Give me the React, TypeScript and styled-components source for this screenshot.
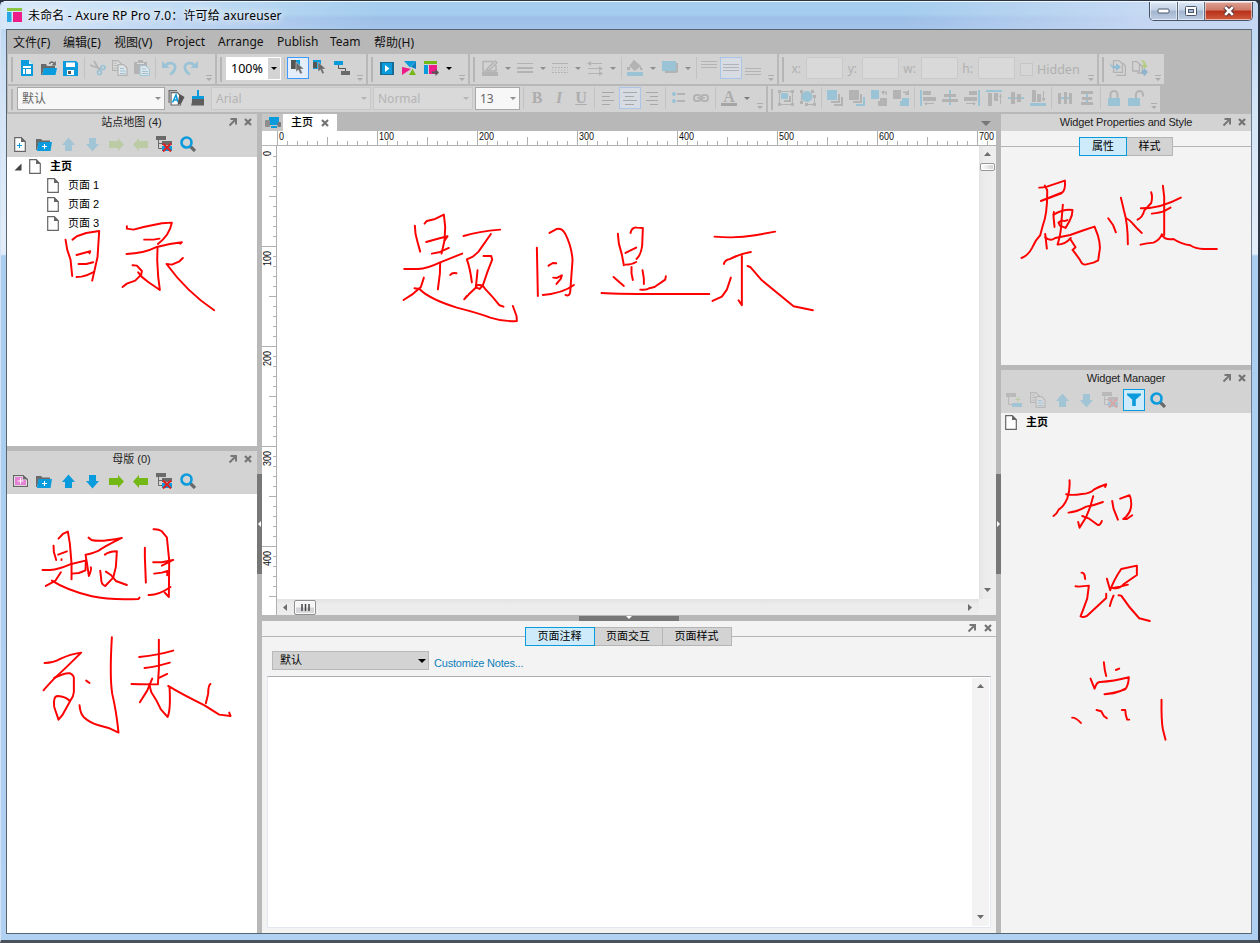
import React from "react";
import styled, { createGlobalStyle, css } from "styled-components";

const UI = `"Noto Sans", "Noto Sans CJK SC", sans-serif`;
const ARIAL = `"Liberation Sans", "Noto Sans CJK SC", sans-serif`;

const BLUE = "#0a9bdc";
const DIM_BLUE = "#9bc3d6";
const GREY = "#6a6a6a";
const DIM = "#b3b3b3";
const GREEN = "#74b816";
const PINK = "#ee1c88";
const CHROME = "#b8b8b8";
const BAR = "#d3d3d3";
const PANEL = "#f3f3f3";

const Global = createGlobalStyle`
  html, body { margin: 0; padding: 0; background: #2b3440; }
  * { box-sizing: border-box; }
  svg { display: block; flex: none; }
`;

/* ---------- window ---------- */
const Window = styled.div`
  position: relative;
  width: 1260px;
  height: 943px;
  overflow: hidden;
  display: flex;
  flex-direction: column;
  font-family: ${UI};
  font-size: 12px;
  color: #111;
  background: linear-gradient(to bottom, #b7d4f2 0, #d3e4f6 100px, #e4eefa 253px, #aacdf0 255px, #b1d1f3 100%);
  border-top: 1px solid #2a3442;
  border-left: 1px solid #d4e4f4;
  border-right: 2px solid #2c3644;
  border-bottom: 3px solid #4a525b;
  border-radius: 6px 6px 0 0;
`;
const TitleBar = styled.div`
  height: 28px;
  flex: none;
  display: flex;
  align-items: flex-start;
  justify-content: space-between;
  border-top: 1px solid #eef7ff;
  background: linear-gradient(to right, rgba(225, 238, 252, 0.85), rgba(225, 238, 252, 0) 380px, rgba(225, 238, 252, 0) 900px, rgba(210, 222, 245, 0.75) 1150px),
    linear-gradient(to bottom, #a6cdee 0, #a5cdee 12px, #9dbfe8 16px, #a3c3ea 100%);
`;
const TitleText = styled.div`
  display: flex;
  align-items: center;
  gap: 6px;
  height: 26px;
  padding-left: 6px;
  font-size: 12px;
  letter-spacing: 0.18px;
  color: #000;
  white-space: pre;
  text-shadow: 0 0 8px #fff, 0 0 8px #fff;
`;
const Controls = styled.div`
  display: flex;
  width: 104px;
  height: 19px;
  border: 1px solid #44536a;
  border-top: 0;
  border-radius: 0 0 5px 5px;
  overflow: hidden;
  margin-right: 5px;
`;
const Control = styled.div<{ $w: number; $close?: boolean }>`
  width: ${(p) => p.$w}px;
  display: flex;
  align-items: center;
  justify-content: center;
  border-right: ${(p) => (p.$close ? "0" : "1px solid #5a6a80")};
  box-shadow: inset 0 0 0 1px rgba(255, 255, 255, 0.55);
  background: ${(p) =>
    p.$close
      ? "linear-gradient(#dda193 0, #d07a68 45%, #b8301a 50%, #cf5c3c 100%)"
      : "linear-gradient(#dbe7f5 0, #c3d2e6 45%, #a3b5cf 50%, #bccde2 100%)"};
`;
const Client = styled.div`
  flex: 1;
  margin: 0 6px 6px 5px;
  display: flex;
  flex-direction: column;
  border: 1px solid #56656f;
  border-right-color: #6d7f90;
  background: ${CHROME};
`;

/* ---------- menu and toolbars ---------- */
const MenuBar = styled.div`
  display: flex;
  height: 24px;
  padding: 0 0 1px 6px;
  align-items: center;
`;
const MenuItem = styled.div<{ $w: number }>`
  width: ${(p) => p.$w}px;
  white-space: nowrap;
`;
const ToolRow = styled.div<{ $h: number }>`
  display: flex;
  height: ${(p) => p.$h}px;
  gap: 2px;
  padding-left: 1px;
  margin-bottom: 2px;
`;
const Bar = styled.div<{ $w: number; $lead?: number }>`
  position: relative;
  width: ${(p) => p.$w}px;
  height: 100%;
  display: flex;
  align-items: center;
  padding: 0 0 2px ${(p) => p.$lead ?? 8}px;
  background: ${BAR};
  &::before {
    content: "";
    position: absolute;
    left: 3px;
    top: 3px;
    bottom: 2px;
    width: 2px;
    background: #b5b5b5;
  }
`;
const Btn = styled.div<{ $on?: boolean; $hot?: boolean }>`
  width: 22px;
  height: 22px;
  flex: none;
  display: flex;
  align-items: center;
  justify-content: center;
  ${(p) =>
    p.$on &&
    css`
      border: 1px solid ${p.$hot ? "#3d9bff" : "#a9c6e6"};
      background: ${p.$hot ? "#e3eefa" : "#d6dbe4"};
    `}
`;
const CaretSlot = styled.div`
  width: 13px;
  flex: none;
  display: flex;
  justify-content: center;
`;
const SepSlot = styled.div<{ $w?: number }>`
  width: ${(p) => p.$w ?? 5}px;
  height: 22px;
  flex: none;
  display: flex;
  justify-content: center;
  &::after {
    content: "";
    width: 1px;
    background: #c2c2c2;
  }
`;
const MoreMark = styled.svg`
  position: absolute;
  right: 3px;
  bottom: 2px;
`;
const Combo = styled.div<{ $w: number; $ml?: number; $off?: boolean }>`
  width: ${(p) => p.$w}px;
  height: 23px;
  flex: none;
  margin-left: ${(p) => p.$ml ?? 0}px;
  display: flex;
  align-items: center;
  justify-content: space-between;
  padding: 0 3px 0 4px;
  font-size: 12px;
  color: ${(p) => (p.$off ? "#b4b4b4" : "#666")};
  background: ${(p) => (p.$off ? "#d9d9d9" : "#f7f7f7")};
  border: 1px solid ${(p) => (p.$off ? "#c9c9c9" : "#a8a8a8")};
`;
const Zoom = styled.div`
  width: 55px;
  height: 23px;
  margin-left: 1px;
  display: flex;
  align-items: center;
  justify-content: space-between;
  background: #fff;
  padding-left: 5px;
  color: #000;
  font-size: 12.5px;
`;
const ZoomDrop = styled.div`
  width: 12px;
  height: 21px;
  margin-right: 1px;
  background: ${BAR};
  display: flex;
  align-items: center;
  justify-content: center;
`;
const CoordLabel = styled.div<{ $w: number }>`
  width: ${(p) => p.$w}px;
  text-align: right;
  padding-right: 5px;
  color: #b0b0b0;
  font-size: 12px;
`;
const CoordBox = styled.div`
  width: 37px;
  height: 22px;
  background: #d9d9d9;
  border: 1px solid #c9c9c9;
  border-radius: 1px;
`;
const Check = styled.div`
  width: 13px;
  height: 13px;
  margin: 2px 4px 0 5px;
  border: 1px solid #c6c6c6;
  background: #d6d6d6;
`;
const Hidden = styled.div`
  color: #b0b0b0;
  font-size: 12.5px;
  letter-spacing: 0;
  padding-top: 2px;
`;

/* ---------- docked panels ---------- */
const Work = styled.div`
  flex: 1;
  display: flex;
  min-height: 0;
`;
const Side = styled.div`
  width: 250px;
  flex: none;
  display: flex;
  flex-direction: column;
`;
const Center = styled.div`
  width: 734px;
  flex: none;
  display: flex;
  flex-direction: column;
`;
const Splitter = styled.div`
  width: 5px;
  flex: none;
  display: flex;
  flex-direction: column;
  padding-top: 360px;
`;
const Handle = styled.div<{ $row?: boolean }>`
  width: ${(p) => (p.$row ? 100 : 5)}px;
  height: ${(p) => (p.$row ? 5 : 100)}px;
  display: flex;
  align-items: ${(p) => (p.$row ? "flex-start" : "center")};
  justify-content: center;
  background: #777;
`;
const RowGap = styled.div<{ $h: number }>`
  height: ${(p) => p.$h}px;
  flex: none;
  display: flex;
  justify-content: center;
  align-items: flex-end;
`;
const Panel = styled.div<{ $h?: number; $bg: string }>`
  ${(p) => (p.$h ? `height: ${p.$h}px; flex: none;` : "flex: 1;")}
  background: ${(p) => p.$bg};
`;
const PanelTitle = styled.div`
  height: 17px;
  display: grid;
  grid-template-columns: 44px 1fr 44px;
  grid-template-rows: 17px;
  align-items: center;
  background: ${BAR};
  font-family: ${ARIAL};
  font-size: 11px;
  color: #222;
  text-align: center;
  white-space: nowrap;
`;
const PanelName = styled.span<{ $cjk?: boolean; $ls?: number }>`
  padding-right: ${(p) => (p.$cjk ? 1 : 0)}px;
  line-height: ${(p) => (p.$cjk ? 15 : 13)}px;
  letter-spacing: ${(p) => p.$ls ?? 0}px;
`;
const PanelActions = styled.div`
  display: flex;
  justify-content: flex-end;
  gap: 5px;
  padding-right: 4px;
  padding-bottom: 1px;
`;
const PanelTools = styled.div`
  height: 26px;
  display: flex;
  align-items: center;
  padding-left: 1px;
  background: ${BAR};
`;
const PTool = styled.div<{ $on?: boolean; $dim?: boolean }>`
  width: ${(p) => (p.$on ? 22 : 24)}px;
  height: 22px;
  margin: ${(p) => (p.$on ? "0 1px" : "0")};
  display: flex;
  align-items: center;
  justify-content: center;
  ${(p) => p.$on && `border: 1px solid ${BLUE}; background: #cdebfa;`}
  & > svg { opacity: ${(p) => (p.$dim ? 0.24 : 1)}; }
`;
const Tree = styled.div`
  display: flex;
  flex-direction: column;
  font-family: ${ARIAL};
  font-size: 11px;
  color: #000;
`;
const Node = styled.div<{ $lead: number; $gap: number; $bold?: boolean }>`
  height: 19px;
  display: flex;
  align-items: center;
  gap: ${(p) => p.$gap}px;
  padding-left: ${(p) => p.$lead}px;
  font-weight: ${(p) => (p.$bold ? 700 : 400)};
`;
const NodeText = styled.span`
  line-height: 15px;
  padding-bottom: 1px;
`;
const Twisty = styled.svg`
  margin-right: -2px;
`;

/* ---------- canvas ---------- */
const TabStrip = styled.div`
  height: 17px;
  display: flex;
  justify-content: space-between;
  align-items: stretch;
  padding-right: 5px;
`;
const TabsLeft = styled.div`
  display: flex;
`;
const TabIcon = styled.div`
  width: 21px;
  background: #c6c6c6;
  display: flex;
  align-items: center;
  justify-content: center;
`;
const DocTab = styled.div`
  width: 54px;
  background: #fff;
  display: flex;
  align-items: center;
  justify-content: space-between;
  padding: 0 7px 0 8px;
  font-size: 11px;
  font-family: ${ARIAL};
  font-weight: 500;
  color: #000;
`;
const DropSlot = styled.div`
  display: flex;
  align-items: center;
  padding-top: 2px;
`;
const Sheet = styled.div`
  height: 484px;
  display: grid;
  grid-template-columns: 15px 702px 17px;
  grid-template-rows: 15px 453px 16px;
`;
const RulerTop = styled.div`
  grid-column: 2 / 4;
  background: #fff;
`;
const RulerCorner = styled.div`
  background: #fff;
  border-bottom: 1px solid #b5b5b5;
`;
const RulerLeft = styled.div`
  grid-row: 2 / 4;
  grid-column: 1;
  background: #fff;
`;
const Canvas = styled.div`
  background: #fff;
`;
const VScroll = styled.div<{ $bg?: string }>`
  display: flex;
  flex-direction: column;
  justify-content: space-between;
  align-items: center;
  padding: 5px 0 7px;
  background: ${(p) => p.$bg ?? "linear-gradient(to right, #e4e4e4, #ececec 5px, #eee)"};
`;
const VTop = styled.div`
  display: flex;
  flex-direction: column;
  align-items: center;
  gap: 7px;
`;
const VThumb = styled.div`
  width: 15px;
  height: 8px;
  border: 1px solid #969696;
  border-radius: 2px;
  background: linear-gradient(to right, #fff, #d0d0d0);
  box-shadow: inset 0 0 0 1px #fff;
`;
const HScroll = styled.div`
  display: flex;
  align-items: center;
  justify-content: space-between;
  padding: 0 7px 0 6px;
  background: linear-gradient(#e2e2e2, #ececec 5px, #ededed);
`;
const HLeft = styled.div`
  display: flex;
  align-items: center;
  gap: 7px;
`;
const HThumb = styled.div`
  width: 22px;
  height: 15px;
  border: 1px solid #8f8f8f;
  border-radius: 2px;
  background: linear-gradient(#f6f6f6 45%, #d2d2d6 55%, #dcdcdc);
  box-shadow: inset 0 0 0 1px #fbfbfb;
  display: flex;
  align-items: center;
  justify-content: center;
`;
const Corner = styled.div`
  background: #f0f0f0;
`;

/* ---------- notes / property tabs ---------- */
const NotesPanel = styled.div`
  flex: 1;
  background: ${PANEL};
  display: flex;
  flex-direction: column;
  padding: 0 5px 5px;
`;
const NotesTop = styled.div`
  display: flex;
  justify-content: flex-end;
  align-items: center;
  height: 16px;
  margin: 0 -6px 0 -5px;
  border-bottom: 1px solid #b5b5b5;
`;
const NotesActions = styled(PanelActions)`
  gap: 6px;
`;
const Seg = styled.div<{ $pull?: number }>`
  display: flex;
  justify-content: center;
  margin: -10px ${(p) => p.$pull ?? 0}px 0 0;
  position: relative;
  font-size: 11px;
  font-family: ${ARIAL};
`;
const SegItem = styled.div<{ $w: number; $on?: boolean }>`
  width: ${(p) => p.$w}px;
  height: 19px;
  display: flex;
  align-items: center;
  justify-content: center;
  padding-bottom: 3px;
  color: #000;
  background: ${(p) => (p.$on ? "#cdebfa" : BAR)};
  border: 1px solid ${(p) => (p.$on ? BLUE : "#b5b5b5")};
  border-left-width: ${(p) => (p.$on ? 1 : 0)}px;
`;
const NotesRow = styled.div`
  display: flex;
  align-items: center;
  gap: 5px;
  margin: 5px 0 6px 5px;
  font-size: 11px;
  font-family: ${ARIAL};
`;
const NotesSelect = styled.div`
  width: 157px;
  height: 19px;
  padding: 0 2px 0 7px;
  display: flex;
  align-items: center;
  justify-content: space-between;
  background: ${BAR};
  border: 1px solid #b8b8b8;
  color: #000;
`;
const Link = styled.span`
  color: #0f80b9;
  padding-top: 5px;
  letter-spacing: -0.2px;
`;
const NotesArea = styled.div`
  flex: 1;
  background: #fff;
  border: 1px solid #e1e6ef;
  border-top-color: #abadb3;
  display: flex;
  justify-content: flex-end;
  padding: 1px 1px;
`;
const NotesScroll = styled.div`
  width: 17px;
  display: flex;
  background: ${PANEL};
  & > div { flex: 1; }
`;
const HairLine = styled.div`
  height: 16px;
  border-bottom: 1px solid #b5b5b5;
`;
const Ink = styled.svg`
  position: absolute;
  left: -1px;
  top: -1px;
  pointer-events: none;
`;

/* ---------- small drawings ---------- */
const Svg = ({ children, w = 16, h = 16 }: { children: React.ReactNode; w?: number; h?: number }) => (
  <svg width={w} height={h} viewBox={`0 0 ${w} ${h}`} fill="none">
    {children}
  </svg>
);
const Caret = ({ c = "#8f8f8f" }: { c?: string }) => (
  <svg width={6} height={3} viewBox="0 0 6 3">
    <path d="M0 0H6L3 3Z" fill={c} />
  </svg>
);
const Tri = ({ d, c = "#6d6d6d", w = 7, h = 7 }: { d: string; c?: string; w?: number; h?: number }) => (
  <svg width={w} height={h} viewBox={`0 0 ${w} ${h}`}>
    <path d={d} fill={c} />
  </svg>
);
const More = () => (
  <MoreMark width="6" height="7" viewBox="0 0 6 7">
    <path d="M0 0H6V1H0ZM0 3H6L3 6Z" fill="#adadad" />
  </MoreMark>
);
const Float = () => (
  <Svg w={10} h={10}>
    <path d="M1.500 8.500L7 3M2.500 2H8V7.500" stroke="#777" strokeWidth="2" />
  </Svg>
);
const Close = () => (
  <Svg w={10} h={10}>
    <path d="M2 2L8 8M8 2L2 8" stroke="#747474" strokeWidth="2.200" />
  </Svg>
);
const Page = () => (
  <Svg w={12} h={15}>
    <path d="M1 .7H7.300L11.300 4.700V14.300H.7V.7Z" fill="#fff" stroke="#666" strokeWidth="1.200" />
    <path d="M7 0L12 5H7Z" fill="#666" />
  </Svg>
);
const AddPage = () => (
  <Svg w={12} h={15}>
    <path d="M1 .7H7.300L11.300 4.700V14.300H.7V.7Z" fill="#fff" stroke="#666" strokeWidth="1.200" />
    <path d="M7 0L12 5H7Z" fill="#666" />
    <path d="M5.500 6V11M3 8.500H8" stroke={BLUE} />
  </Svg>
);
const AddMaster = () => (
  <Svg w={15} h={12}>
    <path d="M.6 .6H10L14.400 4.500V11.400H.6Z" fill="#fff" stroke="#666" strokeWidth="1.200" />
    <path d="M10 0L15 4.500H10Z" fill="#666" />
    <path d="M2 2H9.500V5H13V10H2Z" fill="#e681d6" />
    <path d="M7.500 3V9M4.500 6H10.500" stroke="#fff" />
  </Svg>
);
const AddFolder = () => (
  <Svg w={16} h={13}>
    <path d="M0 1H5L6.500 2.500H14V4H3L1 12H0Z" fill={GREY} />
    <path d="M2.500 4H16L14.500 13H1Z" fill={BLUE} />
    <path d="M8.500 6V11M6 8.500H11" stroke="#fff" />
  </Svg>
);
const Up = () => (
  <Svg w={13} h={15}>
    <path d="M6.500 .5L13 8H10V14H3V8H0Z" fill={BLUE} />
  </Svg>
);
const Down = () => (
  <Svg w={13} h={15}>
    <path d="M6.500 14.500L13 7H10V1H3V7H0Z" fill={BLUE} />
  </Svg>
);
const Right = () => (
  <Svg w={15} h={13}>
    <path d="M15 6.500L9 0V3H0V10H9V13Z" fill={GREEN} />
  </Svg>
);
const Left = () => (
  <Svg w={15} h={13}>
    <path d="M0 6.500L6 0V3H15V10H6V13Z" fill={GREEN} />
  </Svg>
);
const TreeDelete = () => (
  <Svg>
    <path d="M0 0H10V4H0Z" fill={GREY} />
    <path d="M2.500 4V12.500H6M2.500 7.500H6" stroke={GREY} />
    <path d="M6 5H16V9H6Z" fill={GREY} />
    <path d="M6 10H16V15H6Z" fill={BLUE} />
    <path d="M7 7.500L15 15.500M15 7.500L7 15.500" stroke="#e01e1e" strokeWidth="2" />
  </Svg>
);
const TreeAdd = () => (
  <Svg>
    <path d="M0 1H10V5H0Z" fill={GREY} />
    <path d="M2.500 5V12.500H6" stroke={GREY} />
    <path d="M6 11H16V15H6Z" fill={BLUE} />
    <path d="M12 5V10M9.500 7.500H14.500" stroke={GREEN} />
  </Svg>
);
const Search = () => (
  <Svg>
    <path d="M10.500 10.500L15 15" stroke={GREY} strokeWidth="3.200" />
    <circle cx="6.500" cy="6.500" r="5" stroke={BLUE} strokeWidth="2.600" />
  </Svg>
);
const Funnel = () => (
  <Svg w={14} h={14}>
    <path d="M0 .5H14V2L8.800 6.500V13H5.200V6.500L0 2Z" fill={BLUE} />
  </Svg>
);
const Copy = ({ g = DIM, b = DIM_BLUE }: { g?: string; b?: string }) => (
  <Svg>
    <path d="M.6 .6H6L9.400 4V10.400H.6Z" fill="#dcdcdc" stroke={g} strokeWidth="1.200" />
    <path d="M2 3H5M2 5.500H6M2 8H6" stroke={g} />
    <path d="M6 4.600H11.500L15 8V15.400H6Z" fill="#dfe5e8" stroke={g} strokeWidth="1.200" />
    <path d="M8 8.500H12M8 11H13.500M8 13.500H13.500" stroke={b} />
  </Svg>
);
const Cursor = ({ x = 7, y = 3 }: { x?: number; y?: number }) => (
  <path transform={`translate(${x} ${y})`} d="M0 0V10L2.400 7.800L4.200 12L6.400 11L4.600 7H8Z" fill={GREY} stroke="#e3e3e3" strokeWidth=".5" />
);
const Logo = () => (
  <Svg w={15} h={15}>
    <path d="M0 0H15V3H0Z" fill="#8cc63f" />
    <path d="M0 4H4.500V14H0Z" fill="#29a9e1" />
    <path d="M6 4H15V14H6Z" fill={PINK} />
  </Svg>
);

const HLines = ({ y0, w, rows = 4, align = "l" }: { y0: number; w: number; rows?: number; align?: string }) => (
  <>
    {Array.from({ length: rows }, (_, i) => {
      const len = i % 2 ? w * 0.66 : w;
      const x = align === "l" ? 2 : align === "r" ? 14 - len : 8 - len / 2;
      return <rect key={i} x={Math.round(x)} y={y0 + i * 4} width={Math.round(len)} height="1" fill="#a8a8a8" />;
    })}
  </>
);
const DimShape = ({ g, b }: { g: string; b?: string }) => (
  <Svg>
    <path d={g} fill={DIM} />
    {b && <path d={b} fill={DIM_BLUE} />}
  </Svg>
);
const DimPair = (p: { g: string; b?: string }) => (
  <Btn>
    <DimShape {...p} />
  </Btn>
);

const FileBar = () => (
  <Bar $w={207}>
    <Btn>
      <Svg w={12} h={16}>
        <path d="M0 0H8L12 4V16H0Z" fill={BLUE} />
        <path d="M8 0L12 4H8Z" fill="#d9effa" />
        <path d="M2 6H10V8H2ZM2 9H4V14H2ZM5 9H10V14H5Z" fill="#fff" />
      </Svg>
    </Btn>
    <Btn>
      <Svg>
        <path d="M0 4H5L6 6H14V8H3L1 15H0Z" fill={GREY} />
        <path d="M3 8H16L14.500 15H1Z" fill={BLUE} />
        <path d="M8.500 4C9 1.500 12 1.500 13 3.500" stroke={GREY} strokeWidth="1.400" />
        <path d="M14.800 1V5.500H10.500Z" fill={GREY} />
      </Svg>
    </Btn>
    <Btn>
      <Svg w={16} h={15}>
        <path d="M0 0H13L15 2V15H0Z" fill={BLUE} />
        <path d="M3 1.500H12V6H3ZM4 9H11V14H4Z" fill="#fff" />
        <path d="M5 10H8V13H5Z" fill="#555" />
      </Svg>
    </Btn>
    <SepSlot />
    <Btn>
      <Svg>
        <path d="M0 5L11 9M4 1L10 11" stroke={DIM} strokeWidth="1.800" />
        <circle cx="13" cy="7.500" r="2" stroke={DIM_BLUE} strokeWidth="1.700" />
        <circle cx="9.500" cy="12.500" r="2" stroke={DIM_BLUE} strokeWidth="1.700" />
      </Svg>
    </Btn>
    <Btn>
      <Copy />
    </Btn>
    <Btn>
      <Svg>
        <path d="M0 2H4V0H9V2H13V14H0Z" fill={DIM} />
        <path d="M3 3H10V4H3Z" fill="#ddd" />
        <path d="M6 5.600H11.500L15.400 9V15.400H6Z" fill="#dfe5e8" stroke={DIM_BLUE} />
        <path d="M8 9H12M8 11.500H14M8 13.500H14" stroke={DIM_BLUE} />
      </Svg>
    </Btn>
    <SepSlot />
    <Btn>
      <Svg>
        <path d="M4 6C8 1 15 3 14 8.500C13.500 12 11 13 9 14.500" stroke={DIM_BLUE} strokeWidth="2.600" />
        <path d="M1 1V8H8.500Z" fill={DIM_BLUE} />
      </Svg>
    </Btn>
    <Btn>
      <Svg>
        <path d="M12 6C8 1 1 3 2 8.500C2.500 12 5 13 7 14.500" stroke={DIM_BLUE} strokeWidth="2.600" />
        <path d="M15 1V8H7.500Z" fill={DIM_BLUE} />
      </Svg>
    </Btn>
    <More />
  </Bar>
);

const SelectBar = () => (
  <Bar $w={149}>
    <Zoom>
      100%
      <ZoomDrop>
        <Caret c="#000" />
      </ZoomDrop>
    </Zoom>
    <SepSlot $w={6} />
    <Btn $on $hot>
      <Svg>
        <path d="M1 0H6V9H1Z" fill="#555" />
        <path d="M6 0H10V5H6Z" fill={BLUE} />
        <Cursor x={6} y={2} />
      </Svg>
    </Btn>
    <Btn>
      <Svg>
        <path d="M1 0H9V9H1Z" fill={BLUE} />
        <path d="M1 2H5V8H1Z" fill="#555" />
        <Cursor x={6} y={2} />
      </Svg>
    </Btn>
    <Btn>
      <Svg>
        <path d="M0 1H9V5H0Z" fill={BLUE} />
        <path d="M4.500 5V8.500H11.500V11" stroke="#555" />
        <path d="M7 11H16V15H7Z" fill={GREY} />
      </Svg>
    </Btn>
    <More />
  </Bar>
);

const PublishBar = () => (
  <Bar $w={100}>
    <Btn>
      <Svg w={14} h={13}>
        <path d="M0 0H14V13H0Z" fill="#1a6b94" />
        <path d="M2 1H12V12H2Z" fill={BLUE} />
        <path d="M5 3L9.500 6.500L5 10Z" fill="#fff" />
      </Svg>
    </Btn>
    <Btn>
      <Svg w={14} h={14}>
        <path d="M2 0H14L8 6.500Z" fill={BLUE} />
        <path d="M14 0V8L9 6Z" fill="#0c7fc0" />
        <path d="M0 6L9 8L0 14Z" fill={PINK} />
        <path d="M10.500 8L14 14H7Z" fill={GREEN} />
      </Svg>
    </Btn>
    <Btn>
      <Svg>
        <path d="M1 1H14V4H1Z" fill={GREEN} />
        <path d="M1 5H5V14H1Z" fill={BLUE} />
        <path d="M6 5H14V14H6Z" fill={PINK} />
        <path d="M9 11.500H12.500V9L16 12.500L12.500 16V13.500H9Z" fill="#555" />
      </Svg>
    </Btn>
    <CaretSlot>
      <Caret c="#000" />
    </CaretSlot>
    <More />
  </Bar>
);

const StyleBar = () => (
  <Bar $w={307} $lead={9}>
    <Btn>
      <Svg>
        <path d="M1 1.500H11M1 1V11H14V5M5 9L13 1L15 2.500L7.500 10L5 10.500Z" stroke={DIM} strokeWidth="1.500" />
        <path d="M0 12H16V16H0Z" fill={DIM} />
      </Svg>
    </Btn>
    <CaretSlot><Caret /></CaretSlot>
    <DimPair g="M0 3H16V4H0ZM0 7H16V9H0ZM0 11H16V13H0Z" />
    <CaretSlot><Caret /></CaretSlot>
    <Btn>
      <Svg>
        <path d="M0 3.500H16" stroke={DIM} />
        <path d="M0 7.500H16M0 12.500H16" stroke={DIM} strokeDasharray="2 1" />
        <path d="M0 10H16" stroke={DIM} strokeDasharray="1 2" />
      </Svg>
    </Btn>
    <CaretSlot><Caret /></CaretSlot>
    <DimPair g="M0 3.500L4 1V3H15V4H4V6ZM1 8H12V6L16 8.500L12 11V9H1ZM1 13H12V11L16 13.500L12 16V14H1Z" />
    <CaretSlot><Caret /></CaretSlot>
    <SepSlot />
    <DimPair g="M7 0L14 6L8 11L2 6ZM6 0H7V6H6ZM13 5L16 10H13ZM0 7H3V10H0Z" b="M0 12H16V16H0Z" />
    <CaretSlot><Caret /></CaretSlot>
    <DimPair g="M2 3H16V12L14 13H3Z" b="M0 1H14V11H0Z" />
    <CaretSlot><Caret /></CaretSlot>
    <SepSlot $w={4} />
    <DimPair g="M0 1H16V2H0ZM0 4H16V5H0ZM0 7H16V8H0Z" />
    <Btn $on>
      <DimShape g="M0 4H16V5H0ZM0 7H16V8H0ZM0 10H16V11H0Z" />
    </Btn>
    <DimPair g="M0 8H16V9H0ZM0 11H16V12H0ZM0 14H16V15H0Z" />
    <More />
  </Bar>
);

const CoordBar = () => (
  <Bar $w={318} $lead={8}>
    <CoordLabel $w={19}>x:</CoordLabel>
    <CoordBox />
    <CoordLabel $w={19}>y:</CoordLabel>
    <CoordBox />
    <CoordLabel $w={22}>w:</CoordLabel>
    <CoordBox />
    <CoordLabel $w={20}>h:</CoordLabel>
    <CoordBox />
    <Check />
    <Hidden>Hidden</Hidden>
    <More />
  </Bar>
);

const MasterBar = () => (
  <Bar $w={65}>
    <Btn>
      <Svg>
        <path d="M3.500 .6H9L12.400 4V12.400H3.500Z" stroke={DIM} strokeWidth="1.300" />
        <path d="M13 3L15.400 6V15.400H6" stroke={DIM} strokeWidth="1.300" />
        <path d="M0 2C1 6 3 6 6 6V3L11 7L6 11V8.500C3 8.500 0 7 0 2Z" fill="#8fbcd4" />
      </Svg>
    </Btn>
    <Btn>
      <Svg>
        <path d="M.6 1.600H5L7.400 4V11H.6ZM8 4L10.400 6.500V13H5" stroke={DIM} strokeWidth="1.300" />
        <path d="M8 0C13 0 14 3 14 5H16L12.500 9L9.500 5H11.500C11.500 3 11 1.500 8 0Z" fill="#b4cc82" />
        <path d="M12.500 8.500L16 12L12.500 16L9 12Z" fill="#8fb4cf" />
      </Svg>
    </Btn>
    <More />
  </Bar>
);

const Glyph = styled.span<{ $i?: boolean; $u?: boolean }>`
  font-family: "Liberation Serif", serif;
  font-size: 16px;
  line-height: 16px;
  font-weight: 700;
  color: #adadad;
  font-style: ${(p) => (p.$i ? "italic" : "normal")};
  text-decoration: ${(p) => (p.$u ? "underline" : "none")};
`;
const FontColor = styled.div`
  width: 16px;
  height: 16px;
  border-bottom: 3px solid #a5a5a5;
  font: 700 16px/13px "Liberation Serif", serif;
  text-align: center;
  color: #adadad;
`;

const TextBar = () => (
  <Bar $w={758}>
    <Combo $w={148} $ml={1}>
      默认 <Caret />
    </Combo>
    <Btn>
      <Svg w={17} h={16}>
        <path d="M1.100 13V.6H9" stroke={GREY} strokeWidth="1.200" />
        <path d="M3.100 2.600H9.500L12.500 6V15H3.100Z" fill="#fff" stroke={GREY} strokeWidth="1.200" />
        <path d="M4.500 12.500L8 5L10 12M5.500 10H9.500" stroke={BLUE} strokeWidth="1.600" />
        <path d="M11.500 4L16.500 7L13.500 13L9.500 15L10.500 9Z" fill="#555" />
      </Svg>
    </Btn>
    <Btn>
      <Svg w={14} h={16}>
        <path d="M6 0H8V6H13V10H1V6H6Z" fill={BLUE} />
        <path d="M1 9H13V15.500H0C1 13.500 1 11 1 9Z" fill="#5f5f5f" />
      </Svg>
    </Btn>
    <Combo $w={160} $off $ml={2}>
      Arial <Caret c="#b5b5b5" />
    </Combo>
    <Combo $w={100} $off $ml={2}>
      Normal <Caret c="#b5b5b5" />
    </Combo>
    <Combo $w={45} $ml={2}>
      13 <Caret />
    </Combo>
    <SepSlot $w={6} />
    <Btn><Glyph>B</Glyph></Btn>
    <Btn><Glyph $i>I</Glyph></Btn>
    <Btn><Glyph $u>U</Glyph></Btn>
    <SepSlot />
    <Btn><Svg><HLines y0={2} w={12} /></Svg></Btn>
    <Btn $on><Svg><HLines y0={2} w={14} align="c" /></Svg></Btn>
    <Btn><Svg><HLines y0={2} w={12} align="r" /></Svg></Btn>
    <SepSlot />
    <DimPair g="M6 3H14V5H6ZM6 10H14V12H6Z" b="M1 4A2 2 0 1 1 1 4.100ZM1 11A2 2 0 1 1 1 11.100Z" />
    <Btn>
      <Svg>
        <rect x="1" y="5" width="6.500" height="6" rx="2.500" stroke={DIM} strokeWidth="2" />
        <rect x="8.500" y="5" width="6.500" height="6" rx="2.500" stroke={DIM} strokeWidth="2" />
        <path d="M4 8H12" stroke={DIM} strokeWidth="1.500" />
      </Svg>
    </Btn>
    <SepSlot $w={6} />
    <Btn><FontColor>A</FontColor></Btn>
    <CaretSlot><Caret c="#7d7d7d" /></CaretSlot>
    <More />
  </Bar>
);

const ArrangeBar = () => (
  <Bar $w={392} $lead={7}>
    <DimPair
      g="M0 0H3V3H0ZM13 0H16V3H13ZM0 13H3V16H0ZM13 13H16V16H13ZM3 1H13V2H3ZM3 14H13V15H3ZM1 3H2V13H1ZM14 3H15V13H14ZM6 12H13V6H11V10H6Z"
      b="M3 3H10V9H3Z"
    />
    <DimPair
      g="M0 0H3V3H0ZM11 0H14V3H11ZM0 11H3V14H0ZM13 5H16V8H13ZM13 13H16V16H13ZM5 13H8V16H5ZM8 14H13V15H8ZM14 8H15V13H14ZM1 3H2V11H1Z"
      b="M7 1A5.500 5.500 0 1 1 6.900 1Z"
    />
    <SepSlot />
    <DimPair g="M11 4H13V13H4V11H11ZM14 7H16V16H7V14H14Z" b="M0 0H10V10H0Z" />
    <DimPair g="M0 0H10V10H0ZM11 4H13V13H4V11H11Z" b="M14 7H16V16H7V14H14Z" />
    <DimPair g="M9 8H16V16H7V11H9ZM10 2L13 0V1.500H16V5H14.500V3H13V5Z" b="M0 0H8V9H0Z" />
    <DimPair g="M0 0H8V9H0ZM16 5V0L14 1.500H10V3H13L11.500 5Z" b="M9 8H16V16H7V11H9Z" />
    <SepSlot />
    <DimPair g="M3 1H11V5H3ZM3 7H16V11H3ZM4 13.500L7 12V13H14V14H7V15.500Z" b="M0 0H2V16H0Z" />
    <DimPair g="M2 4H14V7H2ZM0 9H16V12H0Z" b="M7 0H9V4H7ZM7 7H9V9H7ZM7 12H9V15H7Z" />
    <DimPair g="M5 1H13V5H5ZM0 7H13V11H0ZM12 13.500L9 12V13H2V14H9V15.500Z" b="M14 0H16V16H14Z" />
    <DimPair g="M2 3H6V16H2ZM8 3H12V11H8ZM14.500 3L16 7H15V14H14V7H13Z" b="M0 0H16V2H0Z" />
    <DimPair g="M3 2H7V14H3ZM9 4H13V12H9Z" b="M0 7H3V9H0ZM7 7H9V9H7ZM13 7H16V9H13Z" />
    <DimPair g="M2 0H6V12H2ZM7 4H11V12H7ZM13 1H14V8H15.500L13.500 12L11.500 8H13Z" b="M0 13H16V16H0Z" />
    <SepSlot />
    <DimPair g="M1 3H4V14H1ZM7 2H10V14H7ZM12 3H15V14H12Z" b="M4 7H7V9H4ZM10 7H12V9H10Z" />
    <DimPair g="M2 1H14V4H2ZM3 7H13V10H3ZM2 12H14V15H2Z" b="M7 4H9V7H7ZM7 10H9V12H7Z" />
    <SepSlot />
    <Btn>
      <Svg>
        <path d="M4.500 8V4.500A3.500 3.500 0 0 1 11.500 4.500V8" stroke={DIM} strokeWidth="2" />
        <path d="M2 8H14V16H2Z" fill={DIM_BLUE} />
      </Svg>
    </Btn>
    <Btn>
      <Svg>
        <path d="M8 8V4.500A3.200 3.200 0 0 1 15 4.500V6.500" stroke={DIM} strokeWidth="2" />
        <path d="M0 8H12V16H0Z" fill={DIM_BLUE} />
      </Svg>
    </Btn>
    <More />
  </Bar>
);

const Title = ({ name, cjk, ls }: { name: string; cjk?: boolean; ls?: number }) => (
  <PanelTitle>
    <span />
    <PanelName $cjk={cjk} $ls={ls}>{name}</PanelName>
    <PanelActions>
      <Float />
      <Close />
    </PanelActions>
  </PanelTitle>
);
const TreeTools = ({ first, dim }: { first: React.ReactNode; dim?: boolean }) => (
  <PanelTools>
    <PTool>{first}</PTool>
    <PTool><AddFolder /></PTool>
    <PTool $dim={dim}><Up /></PTool>
    <PTool $dim={dim}><Down /></PTool>
    <PTool $dim={dim}><Right /></PTool>
    <PTool $dim={dim}><Left /></PTool>
    <PTool><TreeDelete /></PTool>
    <PTool><Search /></PTool>
  </PanelTools>
);

const HorizontalRuler = () => (
  <svg width="719" height="15" shapeRendering="crispEdges">
    <rect x="0" y="14" width="719" height="1" fill="#b0b0b0" />
    {Array.from({ length: 72 }, (_, i) => {
      const h = i % 10 === 0 ? 15 : i % 5 === 0 ? 9 : 5;
      return <rect key={i} x={i * 10} y={15 - h} width="1" height={h} fill="#b0b0b0" />;
    })}
    {Array.from({ length: 8 }, (_, i) => (
      <text key={i} x={i * 100 + 2} y="9" fontSize="10" fontFamily={ARIAL} textLength={i ? 15 : 5} lengthAdjust="spacingAndGlyphs" fill="#111">
        {i * 100}
      </text>
    ))}
  </svg>
);
const VerticalRuler = () => (
  <svg width="15" height="469" shapeRendering="crispEdges">
    <rect x="14" y="0" width="1" height="469" fill="#b0b0b0" />
    {Array.from({ length: 46 }, (_, i) => {
      const w = i === 0 ? 0 : i % 10 === 0 ? 15 : i % 5 === 0 ? 8 : 4;
      return <rect key={i} x={15 - w} y={i * 10} width={w} height="1" fill="#b0b0b0" />;
    })}
    {Array.from({ length: 5 }, (_, i) => (
      <text
        key={i}
        transform={`translate(9 ${i * 100 + (i ? 20 : 10)}) rotate(-90)`}
        fontSize="10"
        fontFamily={ARIAL}
        textLength={i ? 15 : 5}
        lengthAdjust="spacingAndGlyphs"
        fill="#111"
      >
        {i * 100}
      </text>
    ))}
  </svg>
);

const inkGroups: { x: number; y: number; strokes: string[] }[] = [
  {
    x: 0,
    y: 110,
    strokes: [
      "M196 388L201 418L211 448L216 497",
      "M217 388L230 378L258 368L297 362L292 440L276 511",
      "M229 434L270 423L268 429",
      "M235 461H258L279 456",
      "M229 500L244 499L262 494L282 485",
      "M380 348V355L400 358L430 350L485 339L515 337Q508 375 473 401",
      "M432 388H460L478 385",
      "M379 431Q430 430 470 410Q510 400 545 396L540 400",
      "M472 410L471 450L474 500L479 539L444 515L424 499L414 486",
      "M397 465L410 466L425 482L423 493L405 511L380 520L367 530",
      "M548 443L538 453L515 463L499 461Q560 545 642 600",
    ],
  },
  {
    x: 390,
    y: 190,
    strokes: [
      "M74 106L76 131L82 155L90 184",
      "M103 100L110 92L135 86L161 73L165 110L163 150L154 190",
      "M108 155L140 146L172 138L163 150",
      "M125 190L150 185L176 173",
      "M42 236H84Q110 235 150 216L216 190",
      "M150 217L149 250L143 297",
      "M101 262L92 290L65 313L40 329",
      "M73 294L88 296Q115 325 200 352Q270 370 300 382Q340 395 380 392L379 377L368 347",
      "M180 254Q186 246 199 249",
      "M220 137Q265 123 330 118",
      "M302 131L265 184L248 199L230 207Q240 235 245 276",
      "M280 197H303L306 208L292 244L278 285L268 296L257 291L262 240",
      "M257 285Q278 280 284 295Q310 322 328 345L340 349",
      "M259 290L236 312L222 327L230 317",
      "M440 172L443 317",
      "M478 128L500 116Q515 113 525 130Q545 170 547 210L540 305Q537 320 526 314",
      "M475 226L488 218L498 219",
      "M489 262L500 263L515 255L512 265L499 281",
      "M458 314Q520 308 551 284",
      "M683 130L686 160L695 193L701 225",
      "M721 128Q725 110 740 112L758 113L756 165Q752 195 739 206",
      "M706 188L738 172",
      "M706 223Q725 223 738 215",
      "M724 230V250L728 269",
      "M757 240L761 265V281",
      "M670 260L701 287",
      "M750 298Q770 300 777 294L793 290L825 268L827 258",
      "M634 308Q690 312 957 311",
      "M973 139Q1040 145 1095 135L1155 124",
      "M1001 221Q1003 209 1020 206Q1050 190 1082 185",
      "M1055 197V345L1045 330",
      "M1022 262L1010 298L995 319L967 332",
      "M1072 227L1080 230L1115 270L1210 348L1268 360",
    ],
  },
  {
    x: 0,
    y: 430,
    strokes: [
      "M160 346L161 365L168 389",
      "M175 325L188 311L203 304L209 340L214 400V447",
      "M174 373L200 363",
      "M184 387V389",
      "M127 419H150Q175 417 210 402L256 391",
      "M182 426L165 452L137 467",
      "M155 451Q200 480 275 498Q330 510 415 506L418 502",
      "M265 322L274 329Q300 336 365 323Q310 350 294 362Q270 372 256 373L262 410L266 437Q275 415 272 411",
      "M215 430L236 428L256 420L257 390",
      "M314 373Q325 364 350 363L347 410L339 442L315 467Q302 462 303 445L300 421",
      "M317 424L332 434L347 452L380 464",
      "M434 352V380L437 457",
      "M460 297Q475 296 485 303L500 321L507 390L506 500L493 486",
      "M459 396H485L519 389L485 406",
      "M462 430L485 427L502 422L501 435",
      "M445 494Q475 495 511 470",
      "M133 698Q160 698 180 686Q210 671 243 667Q200 710 162 745Q140 768 130 780",
      "M162 743Q195 726 210 729Q222 735 221 745V785Q220 800 210 812L188 852L175 868L162 830Q158 797 173 797Q195 798 209 812",
      "M258 751L268 758",
      "M335 621Q328 740 336 790Q348 840 355 907L325 893L295 885Q270 878 250 860Q240 848 238 825",
      "M476 628V665Q478 710 473 762Q470 763 394 761",
      "M417 680Q475 674 519 661",
      "M433 713Q460 711 509 697",
      "M501 731L478 742",
      "M456 745L441 781L419 816",
      "M447 761L453 785Q470 810 482 837L502 860Q512 840 508 770L504 767Q550 795 613 825L657 853L691 857L687 847",
      "M631 761Q624 765 624 790L617 819",
    ],
  },
  {
    x: 960,
    y: 100,
    strokes: [
      "M237 262Q250 262 260 259L314 241Q317 270 304 279L242 302L306 276L260 295",
      "M254 256L261 270Q262 340 248 375L240 405Q225 420 216 442Q205 465 184 473",
      "M255 401L260 445",
      "M255 411Q270 425 285 413L330 404L370 390L403 379L413 405Q420 430 419 445L414 480L400 487L375 493Q365 492 360 480Q350 465 337 449L346 441L330 416",
      "M281 335L280 350L283 380",
      "M280 343Q310 325 337 329Q337 345 328 362L316 383L299 376L295 367L305 360Q315 364 322 359",
      "M308 313L304 360Q303 400 292 433Q315 433 332 413",
      "M444 354L459 375L467 396",
      "M482 292L491 330Q503 370 503 432",
      "M498 354Q508 358 515 367Q530 385 545 398",
      "M573 276Q578 290 573 308L552 331Q548 350 532 358",
      "M542 324Q600 325 662 292",
      "M575 340Q600 338 613 332L631 322",
      "M608 256L612 290V404",
      "M541 433Q560 428 580 427Q600 418 605 402Q612 420 640 416Q660 430 690 435Q705 445 730 446H770",
    ],
  },
  {
    x: 960,
    y: 350,
    strokes: [
      "M328 390Q330 420 321 445Q310 470 296 477Q290 490 280 497",
      "M318 432Q335 436 365 431Q390 430 402 417Q420 408 438 402L435 410",
      "M325 487Q350 485 378 469Q400 466 428 455",
      "M399 438L390 470L378 500L358 532L354 515",
      "M366 497L385 504L413 524Q420 526 425 512",
      "M456 452L460 475L473 508",
      "M480 445L508 435Q514 445 513 465Q512 485 497 500L489 506H500L516 495",
      "M364 667Q372 667 373 675L375 686",
      "M346 708L356 709L386 706L381 745L368 780L361 798Q368 803 380 797L438 743V730",
      "M440 685L450 720Q460 690 483 656L530 646V674L490 702Q475 718 458 713L480 709L503 703",
      "M460 736L454 750L449 767",
      "M475 735L483 736Q505 770 537 804L569 812",
      "M431 936Q433 960 438 977",
      "M467 959L477 955",
      "M391 985L403 1015Q410 993 420 995Q460 993 506 981Q504 1008 495 1017Q475 1025 433 1032L460 1029Q480 1024 497 1014",
      "M336 1102Q348 1102 362 1118",
      "M409 1079L423 1083L431 1097L440 1104",
      "M485 1079H495L497 1095L501 1108H507",
      "M604 1048Q603 1110 608 1137L616 1168",
    ],
  },
];

export default function App() {
  return (
    <Window>
      <Global />
      <TitleBar>
        <TitleText>
          <Logo />
          <span>未命名 - Axure RP Pro 7.0：许可给 axureuser</span>
        </TitleText>
        <Controls>
          <Control $w={28}>
            <Svg w={13} h={6}>
              <rect x="1" y="1" width="11" height="4" rx="1" fill="#fff" stroke="#49566b" />
            </Svg>
          </Control>
          <Control $w={27}>
            <Svg w={12} h={11}>
              <rect x=".5" y=".5" width="11" height="9" rx="1" fill="#fff" stroke="#49566b" />
              <rect x="3.500" y="3.500" width="5" height="3" fill="#a9bbd4" stroke="#49566b" />
            </Svg>
          </Control>
          <Control $w={47} $close>
            <Svg w={14} h={12}>
              <path d="M3 2L11 10M11 2L3 10" stroke="#5a3a42" strokeWidth="4.600" />
              <path d="M3.200 2.200L10.800 9.800M10.800 2.200L3.200 9.800" stroke="#fff" strokeWidth="2.600" />
            </Svg>
          </Control>
        </Controls>
      </TitleBar>
      <Client>
        <MenuBar>
          <MenuItem $w={50}>文件(F)</MenuItem>
          <MenuItem $w={51}>编辑(E)</MenuItem>
          <MenuItem $w={52}>视图(V)</MenuItem>
          <MenuItem $w={52}>Project</MenuItem>
          <MenuItem $w={59}>Arrange</MenuItem>
          <MenuItem $w={53}>Publish</MenuItem>
          <MenuItem $w={44}>Team</MenuItem>
          <MenuItem $w={50}>帮助(H)</MenuItem>
        </MenuBar>
        <ToolRow $h={30}>
          <FileBar />
          <SelectBar />
          <PublishBar />
          <StyleBar />
          <CoordBar />
          <MasterBar />
        </ToolRow>
        <ToolRow $h={26}>
          <TextBar />
          <ArrangeBar />
        </ToolRow>
        <Work>
          <Side>
            <Panel $h={332} $bg="#fff">
              <Title name="站点地图 (4)" cjk />
              <TreeTools first={<AddPage />} dim />
              <Tree>
                <Node $lead={7} $gap={9} $bold>
                  <Twisty width="8" height="8" viewBox="0 0 8 8">
                    <path d="M7.500 .5V7.500H.5Z" fill="#444" />
                  </Twisty>
                  <Page />
                  <NodeText>主页</NodeText>
                </Node>
                <Node $lead={40} $gap={9}><Page /><NodeText>页面 1</NodeText></Node>
                <Node $lead={40} $gap={9}><Page /><NodeText>页面 2</NodeText></Node>
                <Node $lead={40} $gap={9}><Page /><NodeText>页面 3</NodeText></Node>
              </Tree>
            </Panel>
            <RowGap $h={5} />
            <Panel $bg="#fff">
              <Title name="母版 (0)" cjk />
              <TreeTools first={<AddMaster />} />
            </Panel>
          </Side>
          <Splitter>
            <Handle><Tri d="M4 0V6L1 3Z" c="#fff" w={5} h={6} /></Handle>
          </Splitter>
          <Center>
            <TabStrip>
              <TabsLeft>
                <TabIcon>
                  <Svg w={16} h={11}>
                    <path d="M4 0H14V8H4ZM6 9H12V11H6Z" fill={BLUE} />
                    <rect x="0" y="3" width="5" height="7" rx="1" fill="#8d8d8d" />
                    <rect x="12.500" y="5" width="3.500" height="5" rx="1" fill="#777" />
                  </Svg>
                </TabIcon>
                <DocTab>
                  <NodeText>主页</NodeText>
                  <Close />
                </DocTab>
              </TabsLeft>
              <DropSlot>
                <Tri d="M0 0H10L5 5Z" c="#777" w={10} h={5} />
              </DropSlot>
            </TabStrip>
            <Sheet>
              <RulerCorner />
              <RulerTop><HorizontalRuler /></RulerTop>
              <RulerLeft><VerticalRuler /></RulerLeft>
              <Canvas />
              <VScroll>
                <VTop>
                  <Tri d="M0 5L3.500 1L7 5Z" w={7} h={5} />
                  <VThumb />
                </VTop>
                <Tri d="M0 0H7L3.500 4Z" w={7} h={4} />
              </VScroll>
              <HScroll>
                <HLeft>
                  <Tri d="M4 0V7L0 3.500Z" w={4} h={7} />
                  <HThumb>
                    <Svg w={9} h={7}>
                      <path d="M1 0V7M4.500 0V7M8 0V7" stroke="#444" strokeWidth="1.500" />
                    </Svg>
                  </HThumb>
                </HLeft>
                <Tri d="M0 0V7L4 3.500Z" w={4} h={7} />
              </HScroll>
              <Corner />
            </Sheet>
            <RowGap $h={6}>
              <Handle $row><Tri d="M0 0H6L3 3Z" c="#fff" w={6} h={3} /></Handle>
            </RowGap>
            <NotesPanel>
              <NotesTop>
                <NotesActions><Float /><Close /></NotesActions>
              </NotesTop>
              <Seg $pull={2}>
                <SegItem $w={70} $on>页面注释</SegItem>
                <SegItem $w={68}>页面交互</SegItem>
                <SegItem $w={69}>页面样式</SegItem>
              </Seg>
              <NotesRow>
                <NotesSelect>
                  <NodeText>默认</NodeText>
                  <Tri d="M0 0H8L4 4Z" c="#000" w={8} h={4} />
                </NotesSelect>
                <Link>Customize Notes...</Link>
              </NotesRow>
              <NotesArea>
                <NotesScroll>
                  <VScroll $bg={PANEL}>
                    <Tri d="M0 5L3.500 1L7 5Z" w={7} h={5} />
                    <Tri d="M0 0H7L3.500 4Z" w={7} h={4} />
                  </VScroll>
                </NotesScroll>
              </NotesArea>
            </NotesPanel>
          </Center>
          <Splitter>
            <Handle><Tri d="M1 0V6L4 3Z" c="#fff" w={5} h={6} /></Handle>
          </Splitter>
          <Side>
            <Panel $h={251} $bg={PANEL}>
              <Title name="Widget Properties and Style" ls={-0.15} />
              <HairLine />
              <Seg>
                <SegItem $w={48} $on>属性</SegItem>
                <SegItem $w={46}>样式</SegItem>
              </Seg>
            </Panel>
            <RowGap $h={5} />
            <Panel $bg={PANEL}>
              <Title name="Widget Manager" ls={-0.15} />
              <PanelTools>
                <PTool $dim><TreeAdd /></PTool>
                <PTool $dim><Copy g={GREY} b={BLUE} /></PTool>
                <PTool $dim><Up /></PTool>
                <PTool $dim><Down /></PTool>
                <PTool $dim><TreeDelete /></PTool>
                <PTool $on><Funnel /></PTool>
                <PTool><Search /></PTool>
              </PanelTools>
              <Tree>
                <Node $lead={4} $gap={9} $bold><Page /><NodeText>主页</NodeText></Node>
              </Tree>
            </Panel>
          </Side>
        </Work>
      </Client>
      <Ink width="1260" height="943" viewBox="0 0 1260 943" fill="none">
        {inkGroups.map((g, i) => (
          <g key={i} transform={`translate(${g.x + 0.2} ${g.y + 0.3}) scale(0.33333)`} stroke="#fe0000" strokeWidth="5.900" strokeLinecap="round" strokeLinejoin="round">
            {g.strokes.map((d, j) => (
              <path key={j} d={d} />
            ))}
          </g>
        ))}
      </Ink>
    </Window>
  );
}
